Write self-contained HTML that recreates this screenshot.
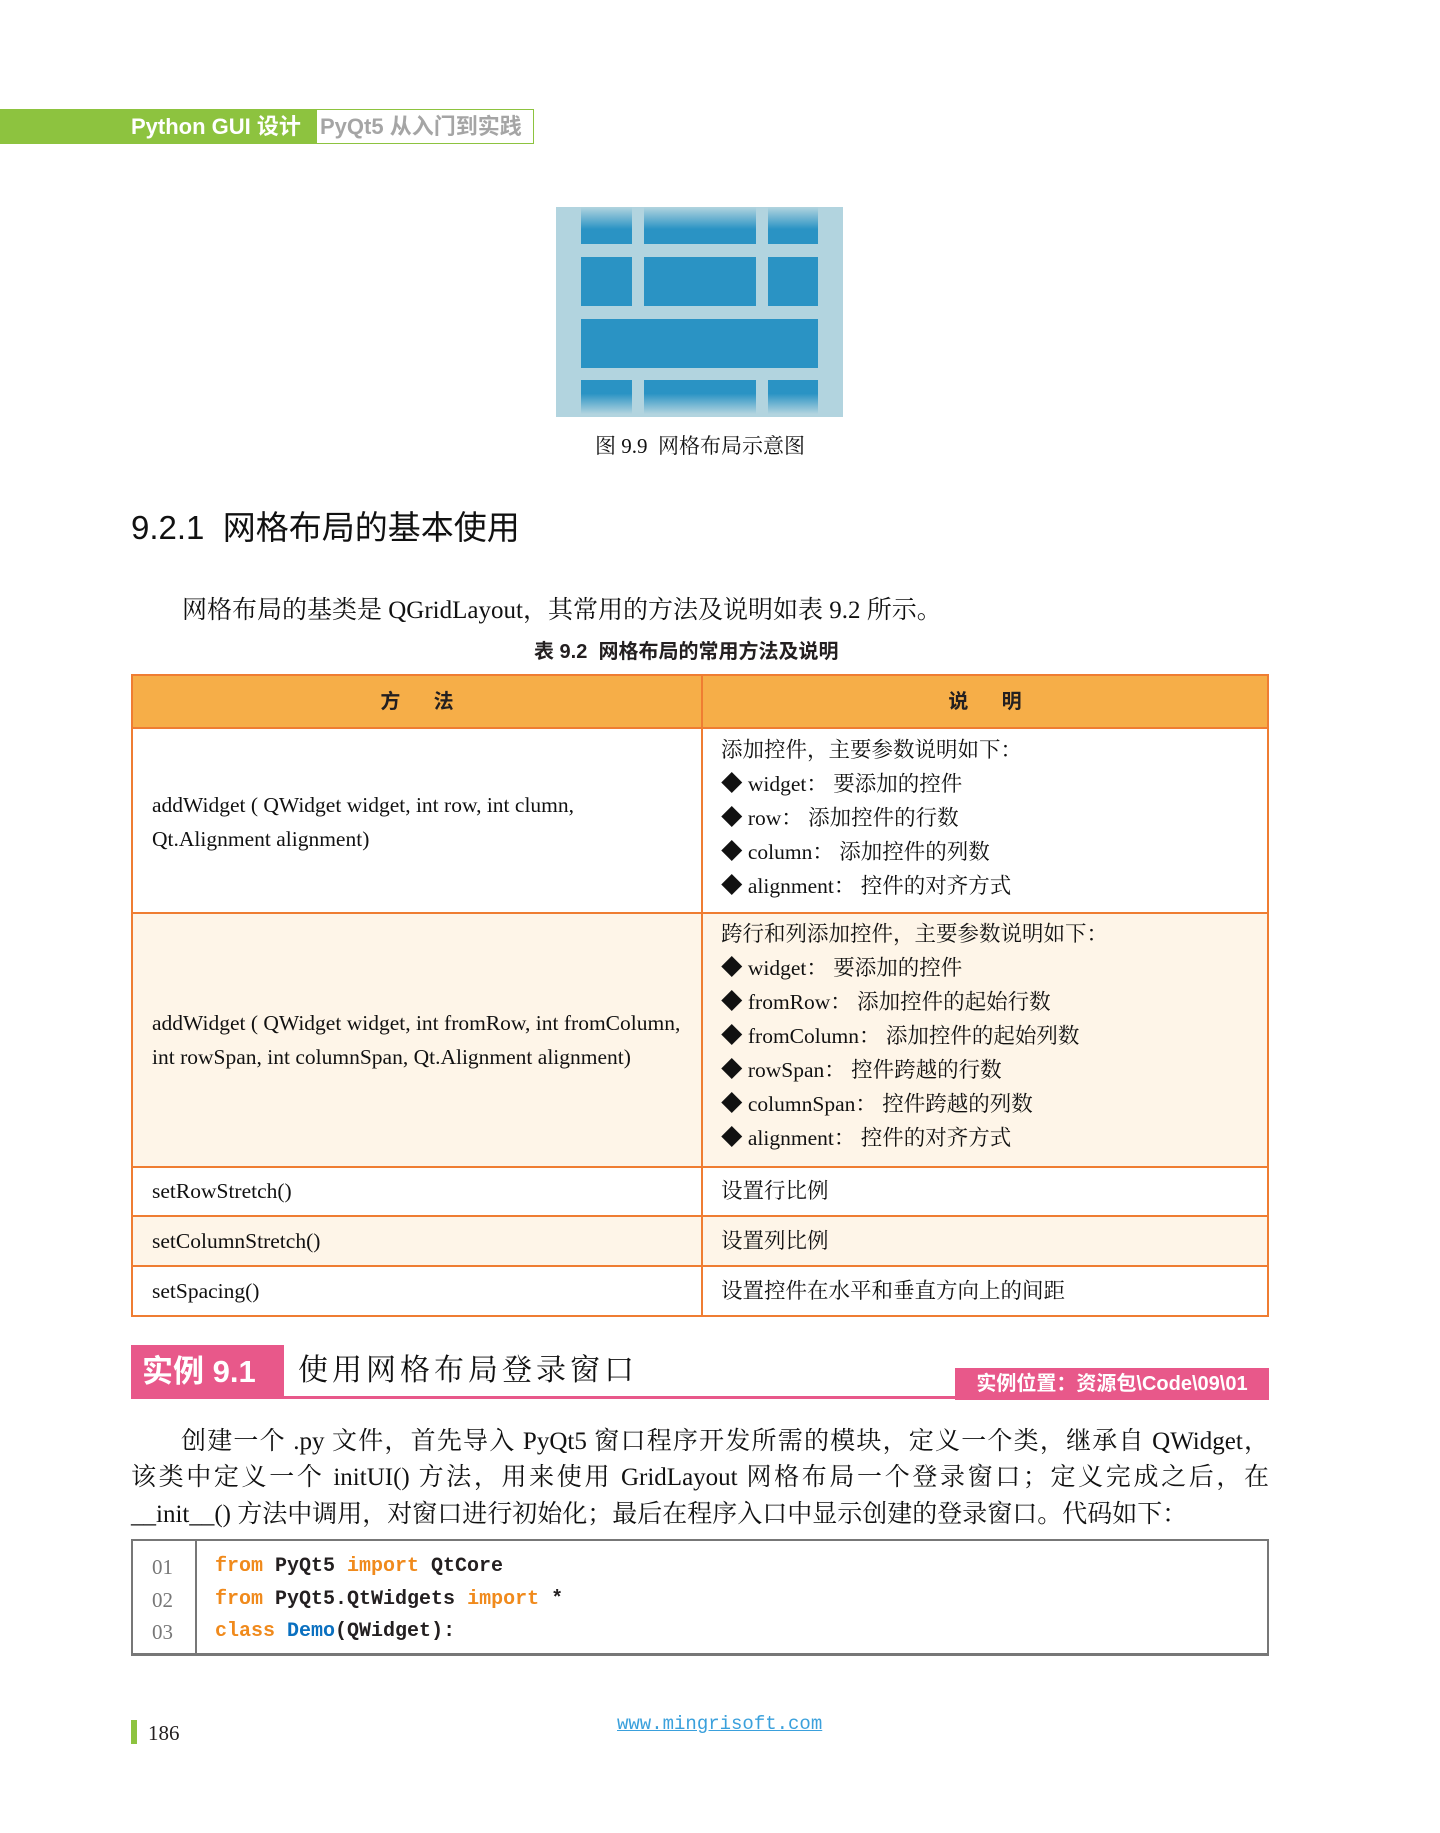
<!DOCTYPE html>
<html><head><meta charset="utf-8"><style>
*{margin:0;padding:0;box-sizing:border-box}
body{width:1440px;height:1833px;background:#fff;position:relative;overflow:hidden;font-family:"Liberation Serif","Noto Serif CJK SC",serif;color:#231f20}
.a{position:absolute;white-space:nowrap}
.sans{font-family:"Liberation Sans","Noto Sans CJK SC",sans-serif}
.cell{position:absolute;background:#2a93c4}
.tb{position:absolute;left:131px;width:1138px;border:2px solid #ef7d32}
.row{position:absolute;left:0;width:1134px;border-top:2px solid #ef7d32}
.vl{position:absolute;left:568px;top:0;bottom:0;border-left:2px solid #ef7d32}
.t{font-size:21.5px;line-height:34px;color:#111}
.code{font-family:"Liberation Mono",monospace;font-size:20px;font-weight:bold}
.o{color:#f08a1c}.b{color:#0a70c0}
.pl{position:absolute;left:131px;width:1138px;font-size:25px;line-height:36px;text-align:justify;text-align-last:justify;white-space:nowrap;color:#111}
</style></head><body>
<!-- header -->
<div class="a" style="left:0;top:109px;width:317px;height:35px;background:#8dc33f"></div>
<div class="a" style="left:317px;top:109px;width:217px;height:35px;border:1.5px solid #8dc33f;border-left:none"></div>
<div class="a sans" style="left:131px;top:109px;line-height:35px;font-size:22px;color:#fff;font-weight:bold">Python GUI 设计</div>
<div class="a sans" style="left:320px;top:109px;line-height:35px;font-size:22px;color:#a5a5a5;font-weight:bold">PyQt5 从入门到实践</div>
<!-- figure -->
<div class="a" style="left:556px;top:207px;width:287px;height:210px;background:#b2d4df">
<div class="cell" style="left:25px;top:0;width:51px;height:37px;background:linear-gradient(#b2d4df,#2a93c4 60%)"></div>
<div class="cell" style="left:88px;top:0;width:112px;height:37px;background:linear-gradient(#b2d4df,#2a93c4 60%)"></div>
<div class="cell" style="left:212px;top:0;width:50px;height:37px;background:linear-gradient(#b2d4df,#2a93c4 60%)"></div>
<div class="cell" style="left:25px;top:50px;width:51px;height:49px"></div>
<div class="cell" style="left:88px;top:50px;width:112px;height:49px"></div>
<div class="cell" style="left:212px;top:50px;width:50px;height:49px"></div>
<div class="cell" style="left:25px;top:112px;width:237px;height:49px"></div>
<div class="cell" style="left:25px;top:173px;width:51px;height:34px;background:linear-gradient(#2a93c4 40%,#b2d4df)"></div>
<div class="cell" style="left:88px;top:173px;width:112px;height:34px;background:linear-gradient(#2a93c4 40%,#b2d4df)"></div>
<div class="cell" style="left:212px;top:173px;width:50px;height:34px;background:linear-gradient(#2a93c4 40%,#b2d4df)"></div>
</div>
<div class="a" style="left:0;width:1400px;text-align:center;top:432px;font-size:21px;line-height:28px;color:#111">图 9.9 &nbsp;网格布局示意图</div>
<!-- heading -->
<div class="a sans" style="left:131px;top:508px;font-size:33px;line-height:40px;color:#111">9.2.1 &nbsp;网格布局的基本使用</div>
<div class="a" style="left:182px;top:594px;font-size:25px;line-height:34px;color:#111">网格布局的基类是 QGridLayout，其常用的方法及说明如表 9.2 所示。</div>
<div class="a sans" style="left:534px;top:638px;font-size:20px;line-height:28px;font-weight:bold">表 9.2 &nbsp;网格布局的常用方法及说明</div>
<!-- table -->
<div class="tb" style="top:674px;height:643px">
<div class="a" style="left:0;top:0;width:1134px;height:51px;background:#f6ae48"></div>
<div class="a" style="left:0;top:238px;width:1134px;height:254px;background:#fef5e8"></div>
<div class="a" style="left:0;top:541px;width:1134px;height:50px;background:#fef5e8"></div>
<div class="row" style="top:51px"></div>
<div class="row" style="top:236px"></div>
<div class="row" style="top:490px"></div>
<div class="row" style="top:539px"></div>
<div class="row" style="top:589px"></div>
<div class="vl"></div>
<div class="a sans" style="left:0;width:568px;text-align:center;top:10px;font-size:20px;line-height:32px;font-weight:bold">方&nbsp;&nbsp;&nbsp;&nbsp;&nbsp;&nbsp;法</div>
<div class="a sans" style="left:570px;width:564px;text-align:center;top:10px;font-size:20px;line-height:32px;font-weight:bold">说&nbsp;&nbsp;&nbsp;&nbsp;&nbsp;&nbsp;明</div>
<div class="a t" style="left:19px;top:112px">addWidget ( QWidget widget, int row, int clumn,<br>Qt.Alignment alignment)</div>
<div class="a t" style="left:588px;top:57px">添加控件，主要参数说明如下：<br>◆ widget： 要添加的控件<br>◆ row： 添加控件的行数<br>◆ column： 添加控件的列数<br>◆ alignment： 控件的对齐方式</div>
<div class="a t" style="left:19px;top:330px">addWidget ( QWidget widget, int fromRow, int fromColumn,<br>int rowSpan, int columnSpan, Qt.Alignment alignment)</div>
<div class="a t" style="left:588px;top:241px">跨行和列添加控件，主要参数说明如下：<br>◆ widget： 要添加的控件<br>◆ fromRow： 添加控件的起始行数<br>◆ fromColumn： 添加控件的起始列数<br>◆ rowSpan： 控件跨越的行数<br>◆ columnSpan： 控件跨越的列数<br>◆ alignment： 控件的对齐方式</div>
<div class="a t" style="left:19px;top:498px">setRowStretch()</div>
<div class="a t" style="left:588px;top:498px">设置行比例</div>
<div class="a t" style="left:19px;top:548px">setColumnStretch()</div>
<div class="a t" style="left:588px;top:548px">设置列比例</div>
<div class="a t" style="left:19px;top:598px">setSpacing()</div>
<div class="a t" style="left:588px;top:598px">设置控件在水平和垂直方向上的间距</div>
</div>
<!-- example -->
<div class="a" style="left:131px;top:1345px;width:153px;height:54px;background:#e8588a"></div>
<div class="a sans" style="left:142px;top:1345px;line-height:54px;font-size:31px;color:#fff;font-weight:bold">实例 9.1</div>
<div class="a" style="left:284px;top:1396px;width:985px;height:3px;background:#e8588a"></div>
<div class="a" style="left:298px;top:1345px;line-height:52px;font-size:30px;letter-spacing:4px;color:#111">使用网格布局登录窗口</div>
<div class="a" style="left:955px;top:1368px;width:314px;height:32px;background:#e8588a"></div>
<div class="a sans" style="left:955px;width:314px;text-align:center;top:1368px;line-height:32px;font-size:20px;color:#fff;font-weight:bold">实例位置：资源包\Code\09\01</div>
<div class="pl" style="top:1424px;padding-left:50px">创建一个 .py 文件，首先导入 PyQt5 窗口程序开发所需的模块，定义一个类，继承自 QWidget，</div>
<div class="pl" style="top:1460px">该类中定义一个 initUI() 方法，用来使用 GridLayout 网格布局一个登录窗口；定义完成之后，在</div>
<div class="a" style="left:131px;top:1497px;font-size:25px;line-height:36px;color:#111">__init__() 方法中调用，对窗口进行初始化；最后在程序入口中显示创建的登录窗口。代码如下：</div>
<!-- code -->
<div class="a" style="left:131px;top:1539px;width:1138px;height:117px;border:2px solid #777;border-bottom-width:3px"></div>
<div class="a" style="left:195px;top:1541px;width:2px;height:112px;background:#777"></div>
<div class="a" style="left:152px;top:1551px;font-size:21px;line-height:32.5px;color:#777">01<br>02<br>03</div>
<div class="a code" style="left:215px;top:1551px;line-height:32.5px"><span class="o">from</span> PyQt5 <span class="o">import</span> QtCore<br><span class="o">from</span> PyQt5.QtWidgets <span class="o">import</span> *<br><span class="o">class</span> <span class="b">Demo</span>(QWidget):</div>
<!-- footer -->
<div class="a" style="left:131px;top:1720px;width:6px;height:24px;background:#8dc33f"></div>
<div class="a" style="left:148px;top:1718px;font-size:21px;line-height:30px">186</div>
<div class="a" style="left:617px;top:1710px;font-family:'Liberation Mono',monospace;font-size:19px;line-height:28px;color:#3aa0dc;text-decoration:underline">www.mingrisoft.com</div>
</body></html>
